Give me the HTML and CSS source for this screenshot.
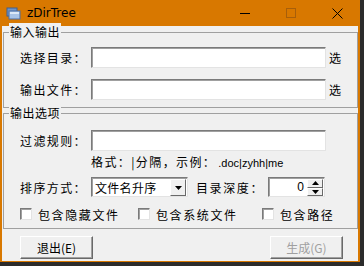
FILE: index.html
```html
<!DOCTYPE html>
<html lang="zh-CN">
  <head>
    <meta charset="UTF-8" />
    <title>zDirTree</title>
    <link rel="stylesheet" href="styles.css">
  </head>
  <body>
    <div class="window">
      <div class="titlebar">
        <svg class="app-icon" width="15" height="15" viewBox="0 0 15 15">
          <rect x="1" y="2" width="10" height="8" fill="#6f94c8" stroke="#3f5f90" stroke-width="1"/>
          <rect x="3" y="5" width="11" height="8" fill="#a9c4e8" stroke="#4d6fa4" stroke-width="1"/>
          <rect x="4" y="6" width="9" height="2" fill="#dce8f7"/>
        </svg>
        <span class="title">zDirTree</span>
        <div class="caption-buttons">
          <span class="cap">
            <svg width="10" height="10" viewBox="0 0 10 10"><path d="M0 5.5H10" stroke="#000" stroke-width="1"/></svg>
          </span>
          <span class="cap">
            <svg width="10" height="10" viewBox="0 0 10 10"><rect x="0.5" y="0.5" width="9" height="9" fill="none" stroke="#a85f0a" stroke-width="1"/></svg>
          </span>
          <span class="cap">
            <svg width="11" height="11" viewBox="0 0 11 11"><path d="M0.5 0.5L10.5 10.5M10.5 0.5L0.5 10.5" stroke="#000" stroke-width="1"/></svg>
          </span>
        </div>
      </div>

      <div class="client">
        <div class="group group-io">
          <span class="group-title">输入输出</span>
          <div class="field-row">
            <label class="field-label">选择目录：</label>
            <div class="textbox"></div>
            <span class="pick">选</span>
          </div>
          <div class="field-row">
            <label class="field-label">输出文件：</label>
            <div class="textbox"></div>
            <span class="pick">选</span>
          </div>
        </div>

        <div class="group group-opt">
          <span class="group-title">输出选项</span>
          <div class="field-row">
            <label class="field-label">过滤规则：</label>
            <div class="textbox"></div>
          </div>
          <div class="hint">格式：|分隔，示例：<span class="hint-sample">.doc|zyhh|me</span></div>
          <div class="field-row sort-row">
            <label class="field-label">排序方式：</label>
            <div class="combo">
              <span class="combo-text">文件名升序</span>
              <span class="combo-btn">
                <svg width="7" height="4" viewBox="0 0 7 4"><path d="M0 0H7L3.5 4Z" fill="#000"/></svg>
              </span>
            </div>
            <label class="depth-label">目录深度：</label>
            <div class="spin">
              <span class="spin-value">0</span>
              <span class="spin-btns">
                <span class="spin-btn"><svg width="7" height="4" viewBox="0 0 7 4"><path d="M0 4H7L3.5 0Z" fill="#000"/></svg></span>
                <span class="spin-btn"><svg width="7" height="4" viewBox="0 0 7 4"><path d="M0 0H7L3.5 4Z" fill="#000"/></svg></span>
              </span>
            </div>
          </div>
          <div class="check-row">
            <span class="check check-hidden"><span class="box"></span>包含隐藏文件</span>
            <span class="check check-system"><span class="box"></span>包含系统文件</span>
            <span class="check"><span class="box"></span>包含路径</span>
          </div>
        </div>

        <div class="buttons">
          <button class="btn">退出(E)</button>
          <button class="btn btn-disabled">生成(G)</button>
        </div>
      </div>
    </div>
  </body>
</html>
```

FILE: styles.css
```css
* {
  box-sizing: border-box;
  margin: 0;
  padding: 0;
}

body {
  background-color: #2b2b2b;
  font-family: "Noto Sans CJK SC", "Noto Sans", sans-serif;
  font-size: 12px;
  color: #000;
}

.window {
  width: 360px;
  height: 262px;
  background-color: #d87800;
  display: flex;
  flex-direction: column;
}

.titlebar {
  height: 26px;
  display: flex;
  align-items: center;
  padding-left: 6px;
}

.app-icon {
  display: block;
}

.title {
  margin-left: 6px;
  font-family: "DejaVu Sans", sans-serif;
  font-size: 12px;
  color: #000;
}

.caption-buttons {
  margin-left: auto;
  display: flex;
  height: 26px;
}

.cap {
  width: 46px;
  height: 26px;
  display: flex;
  align-items: center;
  justify-content: center;
}

.cap svg {
  display: block;
}

.client {
  flex: 1;
  margin: 0 2px 1px 2px;
  background-color: #f0f0f0;
  padding-top: 6px;
}

.group {
  position: relative;
  margin-left: 1px;
  width: 355px;
  border: 1px solid #a0a0a0;
  padding-left: 16px;
}

.group-title {
  position: absolute;
  top: -10px;
  left: 5px;
  padding: 0 1px;
  background-color: #f0f0f0;
  line-height: 18px;
  letter-spacing: 0.5px;
}

.group-io {
  height: 76px;
  padding-top: 14px;
}

.group-io .field-row + .field-row {
  margin-top: 11px;
}

.group-opt {
  margin-top: 5px;
  height: 116px;
  padding-top: 16px;
}

.field-row {
  display: flex;
  align-items: center;
  height: 21px;
}

.field-label {
  flex-shrink: 0;
  width: 71px;
  letter-spacing: 1.4px;
}

.textbox {
  width: 235px;
  height: 21px;
  background-color: #fff;
  border: 1px solid;
  border-color: #7a7a7a #e3e3e3 #e3e3e3 #7a7a7a;
  box-shadow: inset 1px 1px 0 #a0a0a0;
}

.pick {
  margin-left: 3px;
}

.hint {
  margin-left: 71px;
  height: 22px;
  line-height: 22px;
  letter-spacing: 1.4px;
  white-space: nowrap;
}

.hint-sample {
  margin-left: 2px;
  font-family: "Liberation Sans", sans-serif;
  font-size: 11px;
  letter-spacing: 0;
}

.sort-row {
  margin-top: 4px;
  height: 20px;
}

.combo {
  flex-shrink: 0;
  width: 97px;
  height: 20px;
  display: flex;
  align-items: center;
  background-color: #fff;
  border: 1px solid;
  border-color: #7a7a7a #e3e3e3 #e3e3e3 #7a7a7a;
  box-shadow: inset 1px 1px 0 #a0a0a0;
  padding: 1px 1px 0 3px;
}

.combo-text {
  flex: 1;
  letter-spacing: 0.3px;
}

.combo-btn,
.spin-btn {
  display: flex;
  align-items: center;
  justify-content: center;
  background-color: #f0f0f0;
  border: 1px solid;
  border-color: #fff #696969 #696969 #fff;
}

.combo-btn {
  width: 16px;
  height: 17px;
}

.depth-label {
  flex-shrink: 0;
  margin-left: 8px;
  width: 72px;
  letter-spacing: 1.6px;
  white-space: nowrap;
}

.spin {
  flex-shrink: 0;
  width: 57px;
  height: 20px;
  display: flex;
  background-color: #fff;
  border: 1px solid;
  border-color: #7a7a7a #e3e3e3 #e3e3e3 #7a7a7a;
  box-shadow: inset 1px 1px 0 #a0a0a0;
  padding: 1px 1px 0 0;
}

.spin-value {
  flex: 1;
  text-align: right;
  padding-right: 3px;
  line-height: 17px;
  font-family: "Liberation Sans", sans-serif;
}

.spin-btns {
  display: flex;
  flex-direction: column;
  width: 16px;
}

.spin-btn {
  height: 9px;
}

.check-row {
  display: flex;
  align-items: center;
  margin-top: 10px;
  height: 14px;
}

.check {
  display: flex;
  align-items: center;
  letter-spacing: 1.6px;
  white-space: nowrap;
}

.check-hidden {
  width: 118px;
}

.check-system {
  width: 124px;
}

.box {
  width: 12px;
  height: 12px;
  margin-right: 6px;
  background-color: #fff;
  border: 1px solid;
  border-color: #7a7a7a #e3e3e3 #e3e3e3 #7a7a7a;
  box-shadow: inset 1px 1px 0 #a0a0a0;
}

.buttons {
  display: flex;
  justify-content: space-between;
  margin-top: 7px;
  padding: 0 15px 0 18px;
}

.btn {
  width: 73px;
  height: 23px;
  font-family: "Noto Sans CJK SC", "Noto Sans", sans-serif;
  font-size: 12px;
  color: #000;
  background-color: #f0f0f0;
  border: 1px solid;
  border-color: #fff #696969 #696969 #fff;
  box-shadow: inset -1px -1px 0 #a0a0a0;
}

.btn-disabled {
  color: #a0a0a0;
}
```
